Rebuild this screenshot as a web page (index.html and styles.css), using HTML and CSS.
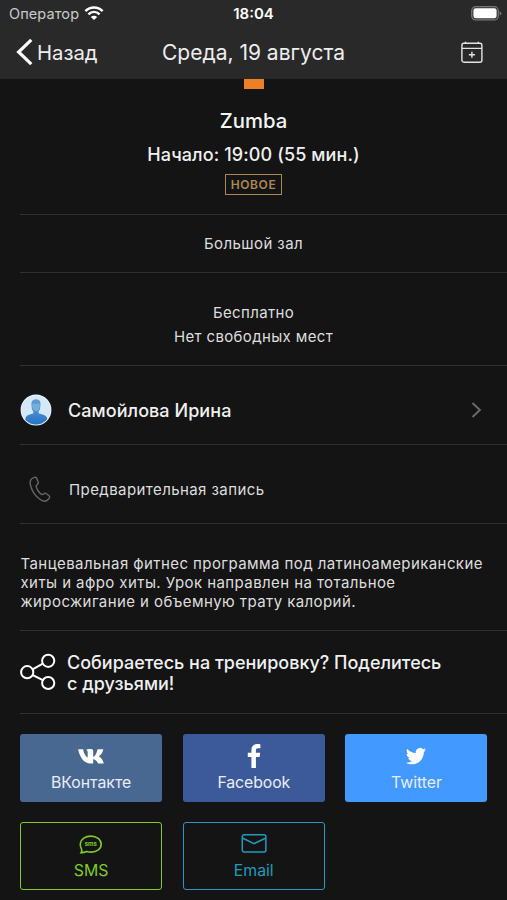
FILE: index.html
```html
<!DOCTYPE html>
<html lang="ru">
<head>
<meta charset="utf-8">
<title>Zumba</title>
<link rel="stylesheet" href="styles.css">
</head>
<body>
<header class="top">
  <div class="status">
    <div class="carrier"><span>Оператор</span>
      <svg width="20" height="16" viewBox="0 0 20 16" fill="none" stroke="#fff" stroke-width="2.5"><path d="M1.4 5.1C6.3.3 13.7.3 18.6 5.1"/><path d="M4.4 8.4c3.3-3.1 7.9-3.1 11.2 0"/><path d="M10 14.1 6.8 10.9c1.8-1.7 4.6-1.7 6.4 0z" fill="#fff" stroke="none"/></svg>
    </div>
    <span class="clock">18:04</span>
    <svg class="battery" width="31" height="15" viewBox="0 0 31 15"><rect x=".7" y=".7" width="26.6" height="13.2" rx="4" fill="#343434" stroke="#777" stroke-width="1.2"/><rect x="2.4" y="2.3" width="23.2" height="10" rx="2.3" fill="#fff"/><path d="M28.6 5.2q1.8.7 1.8 2.2t-1.8 2.2z" fill="#777"/></svg>
  </div>
  <nav class="nav">
    <div class="back"><svg width="17" height="28" viewBox="0 0 17 28" fill="none" stroke="#fff" stroke-width="3.2"><path d="M15.3 1.8 2.6 14l12.7 12.2"/></svg><span>Назад</span></div>
    <h1>Среда, 19 августа</h1>
    <svg class="calendar" width="22" height="23" viewBox="0 0 22 23" fill="none" stroke="#e4e4e4" stroke-width="1.4"><rect x=".9" y="2.2" width="20" height="19" rx="2"/><path d="M1 7.4h20M4.5.7v1.5M17.3.7v1.5M10.9 10.8v6M7.9 13.8h6"/></svg>
  </nav>
</header>
<main>
  <section class="hero">
    <i class="mark"></i>
    <h2>Zumba</h2>
    <p class="start">Начало: 19:00 (55 мин.)</p>
    <span class="tag">НОВОЕ</span>
  </section>
  <section class="hall"><span>Большой зал</span></section>
  <section class="places"><span class="free">Бесплатно</span><span class="none">Нет свободных мест</span></section>
  <section class="row trainer">
    <svg class="avatar" width="32" height="32" viewBox="0 0 32 32"><defs><clipPath id="face"><circle cx="16" cy="16" r="14.6"/></clipPath><linearGradient id="body" x1="0" y1="0" x2="0" y2="1"><stop offset="0" stop-color="#639fd4"/><stop offset="1" stop-color="#2272c5"/></linearGradient></defs><circle cx="16" cy="16" r="15.4" fill="#eef4fa"/><circle cx="16" cy="16" r="14.6" fill="#d3e8f8"/><g clip-path="url(#face)"><path d="M11.4 10c-.7-6.4 9.8-6.5 9.1 0l-.4 4.6c-.3 1.5-1.1 2.1-1.5 2.7v1.9c2.8 1.5 8.2 1 8.7 6v7h-22v-7c.4-5 5.7-4.5 8-6v-1.9c-.5-.6-1.2-1.3-1.5-2.7z" fill="url(#body)"/><path d="M12.3 9.2q3.7 1.2 7.4 0v4.2q-.6 2.9-3.7 4.1-3.1-1.2-3.7-4.1z" fill="#78afd9"/></g></svg>
    <span class="name">Самойлова Ирина</span>
    <svg class="more" width="11" height="16" viewBox="0 0 11 16" fill="none" stroke="#6b6b6b" stroke-width="1.9"><path d="m1.5 1 7.4 7-7.4 7"/></svg>
  </section>
  <section class="row booking">
    <svg width="22" height="27" viewBox="0 0 22 27" fill="none" stroke="#666" stroke-width="1.4" stroke-linejoin="round"><path d="M2.5 3.1C4.2 1.5 6.6.6 7.5 2l1.8 4.3c.7 1.8-1.9 2.3-2.1 3.8-.2 2.2 3.3 7.4 5.5 8.3 1.6.7 2.5-1.8 4.1-1.2l3 2.3c1.5 1.2.8 2.5-.7 4.1-2.1 2.2-5.4 2-8.9-.8C5.2 18.9 2.2 12.7 1.3 8.3c-.4-2.2-.2-3.9 1.2-5.2z"/></svg>
    <span>Предварительная запись</span>
  </section>
  <section class="about"><p>Танцевальная фитнес программа под латиноамериканские<br>хиты и афро хиты. Урок направлен на тотальное<br>жиросжигание и объемную трату калорий.</p></section>
  <section class="row share">
    <svg width="36" height="38" viewBox="0 0 36 38" fill="none" stroke="#fff" stroke-width="2"><circle cx="7.2" cy="19.2" r="6.1"/><circle cx="28.2" cy="7.8" r="6.1"/><circle cx="28.2" cy="30" r="6.1"/><path d="m12.6 16.3 10.2-5.6M12.6 22l10.2 5.2"/></svg>
    <p>Собираетесь на тренировку? Поделитесь<br>с друзьями!</p>
  </section>
  <div class="buttons">
    <a class="btn vk"><svg width="28" height="26" viewBox="0 0 28 26" fill="#fff"><path d="M14.4 20.6C6.5 20.6 3 14.2 1 6.2h5.1c.8 4.6 2.7 7.5 4.6 8.4V9.1c0-1-.6-1.7-1.5-2.1.8-.7 2-.9 3.8-.9 2.3 0 3.2.4 3.2 2.1v5.6c1.8-.5 3.6-3.5 4.4-7.6h5.7c-.5 3.3-2.3 5.6-4.5 7.1 2.2 1.5 4.1 3.7 5 7.3h-5.7c-.8-2.3-2.6-4.1-4.9-4.7v4.7z"/></svg><span>ВКонтакте</span></a>
    <a class="btn fb"><svg width="28" height="26" viewBox="0 0 28 26" fill="#fff"><path d="M11.4 25V14H7.8V9.8h3.6V7c0-3.9 2.2-5.9 5.7-5.9 1.6 0 3 .2 3.3.3v3.9h-2.3c-1.8 0-2.2.9-2.2 2.2v2.3h4.3l-.6 4.2h-3.7v11z"/></svg><span>Facebook</span></a>
    <a class="btn tw"><svg width="28" height="26" viewBox="0 0 28 26" fill="#fff"><path d="M24 6.7c-.7.4-1.4.6-2.2.7.8-.5 1.4-1.2 1.7-2.2-.8.5-1.7.8-2.6 1a4.2 4.2 0 0 0-7.1 3.8c-3.5-.2-6.5-1.8-8.6-4.3-1.1 1.9-.6 4.2 1.3 5.6-.7 0-1.3-.2-1.9-.5 0 2 1.4 3.8 3.4 4.2-.6.2-1.3.2-1.9.1.5 1.6 2 2.8 3.9 2.9a8.3 8.3 0 0 1-6 1.7c6.1 3.8 17.2 1.2 17.9-10.8.8-.6 1.5-1.3 2.1-2.2z"/></svg><span>Twitter</span></a>
    <a class="btn sms"><svg width="28" height="26" viewBox="0 0 28 26" fill="none" stroke="#80cb28" stroke-width="1.6"><path d="M4.1 22.7c1.1-1.8 1-2.7.3-4-1.1-1.6-1.4-3.5-1-5.6.7-4 5-7 10.4-7 5.9 0 10.4 3.5 10.4 8.2 0 4.6-4.3 7.8-10 7.8-1.8 0-3.2-.2-4.5-.7-1.5.6-3.3 1.1-5.6 1.3z"/><text x="13.8" y="15.8" class="glyph">sms</text></svg><span>SMS</span></a>
    <a class="btn mail"><svg width="28" height="26" viewBox="0 0 28 26" fill="none" stroke="#239abc" stroke-width="1.5"><rect x="2.3" y="4.8" width="23.6" height="17.2" rx="2"/><path d="m2.8 8.2 11.3 5.4 11.3-5.4"/></svg><span>Email</span></a>
  </div>
</main>
</body>
</html>
```
FILE: styles.css
```css
* { box-sizing: border-box; margin: 0; padding: 0; }
body { height: 900px; overflow: hidden; background: #141414; color: #dedede; font-family: Inter, "Liberation Sans", sans-serif; font-size: 15px; }
svg { display: block; flex: none; }
span { white-space: nowrap; }
.top { height: 79px; background: #292929; }
.status { display: grid; grid-template-columns: 1fr auto 1fr; align-items: center; height: 27px; padding: 0 9px 0 9px; }
.carrier { display: flex; align-items: center; gap: 5px; font-size: 14.5px; letter-spacing: .1px; color: #c9c9c9; }
.clock { font-size: 15px; font-weight: 600; color: #fff; }
.battery { justify-self: end; margin-right: -4px; }
.nav { display: grid; grid-template-columns: 1fr auto 1fr; align-items: center; height: 50px; padding: 0 16px; color: #eee; }
.back { display: flex; align-items: center; gap: 4px; font-size: 20.3px; }
h1 { font-size: 21px; font-weight: 400; white-space: nowrap; }
.calendar { justify-self: end; margin-right: 8px; }
section { margin-left: 20px; border-bottom: 1px solid #303030; }
.hero { display: flex; flex-direction: column; align-items: center; height: 136px; padding-right: 20px; }
.mark { width: 20px; height: 10px; background: #eb8028; }
h2 { margin-top: 19px; font-size: 20.3px; font-weight: 500; line-height: 26px; color: #f5f5f5; }
.start { margin-top: 9px; font-size: 18px; font-weight: 500; line-height: 24px; letter-spacing: .11px; color: #f0f0f0; white-space: nowrap; }
.tag { margin-top: 7px; height: 21px; padding: 0 5px; border: 1.8px solid #ad8951; color: #ad8951; font-size: 12px; font-weight: 600; line-height: 19px; letter-spacing: .6px; }
.hall, .places, .booking, .about { letter-spacing: .42px; }
.hall { height: 58px; padding-right: 20px; display: flex; align-items: center; justify-content: center; }
.places { height: 93px; display: flex; flex-direction: column; align-items: center; justify-content: center; line-height: 24px; padding: 12px 20px 0 0; letter-spacing: .36px; }
.row { display: flex; align-items: center; }
.trainer { height: 79px; padding: 11px 25px 0 0; gap: 16px; }
.trainer .avatar { margin-top: -1px; }
.name { font-size: 18px; font-weight: 500; letter-spacing: .06px; color: #f0f0f0; }
.trainer .more { margin: -1px 0 0 auto; }
.booking { height: 79px; padding: 10px 0 0 9px; gap: 18px; }
.about { height: 107px; padding: 30px 0 0 .5px; line-height: 19px; white-space: nowrap; }
.share { height: 83px; gap: 11px; font-size: 18px; font-weight: 500; line-height: 21.5px; color: #f0f0f0; white-space: nowrap; }
.share p { margin-top: 2px; }
.buttons { display: grid; grid-template-columns: repeat(3, 142px); gap: 20px 20.7px; padding: 20px 0 0 20.1px; }
.btn { display: flex; flex-direction: column; align-items: center; height: 68px; padding-top: 9px; border-radius: 3px; font-size: 15.8px; line-height: 22px; color: #e8eef8; }
.btn span { margin-top: 3px; }
.sms svg, .mail svg { margin-top: -1px; }
.vk { background: #486892; }
.fb { background: #3c5a99; letter-spacing: -.08px; }
.tw { background: #4299ff; }
.sms, .mail { padding-top: 8px; border: 1.4px solid; }
.sms span, .mail span { margin-top: 4px; }
.sms { color: #80cb28; }
.mail { color: #239abc; }
.glyph { font: 700 6px Inter, sans-serif; text-anchor: middle; fill: #80cb28; stroke: none; }
```
